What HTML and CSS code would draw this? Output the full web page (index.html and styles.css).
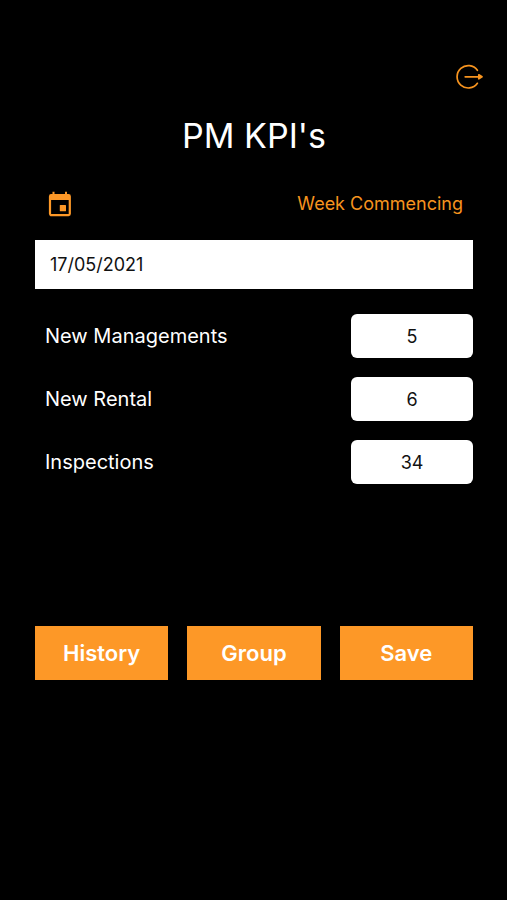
FILE: index.html
```html
<!DOCTYPE html>
<html lang="en">
<head>
    <meta charset="UTF-8">
    <meta name="viewport" content="width=device-width, initial-scale=1.0">
    <title>PM KPI's</title>
    <link rel="stylesheet" href="styles.css">
</head>
<body>
    <header class="top-bar">
        <button class="icon-btn" type="button" aria-label="Log out">
            <svg width="28" height="26" viewBox="0 0 28 26" fill="none" stroke="#f7941f" stroke-width="1.7" stroke-linecap="round">
                <path d="M21.4 6.3A11.2 11.2 0 1 0 21.4 19.3"/>
                <path d="M9.2 12.8H23"/>
                <path d="M22.8 10.8L26 12.8L22.8 14.8Z" fill="#f7941f" stroke-linejoin="round"/>
            </svg>
        </button>
    </header>

    <main class="kpi">
        <h1>PM KPI's</h1>

        <form class="kpi-form">
            <div class="week-header">
                <svg width="24" height="26" viewBox="0 0 24 26" fill="#fd9827">
                    <path fill-rule="evenodd" d="M4.5 0.8H6.5V3H17V0.8H19V3H20.5A2.4 2.4 0 0 1 22.9 5.4V22.8A2.4 2.4 0 0 1 20.5 25.2H3.3A2.4 2.4 0 0 1 0.9 22.8V5.4A2.4 2.4 0 0 1 3.3 3H4.5ZM3.1 8.9V23.1H20.7V8.9Z"/>
                    <rect x="11.8" y="14" width="6.2" height="6.2" rx="0.5"/>
                </svg>
                <label for="week">Week Commencing</label>
            </div>
            <input class="date-input" type="text" id="week" value="17/05/2021">

            <div class="fields">
                <div class="field">
                    <label for="managements">New Managements</label>
                    <input type="text" inputmode="numeric" id="managements" value="5">
                </div>
                <div class="field">
                    <label for="rental">New Rental</label>
                    <input type="text" inputmode="numeric" id="rental" value="6">
                </div>
                <div class="field">
                    <label for="inspections">Inspections</label>
                    <input type="text" inputmode="numeric" id="inspections" value="34">
                </div>
            </div>

            <div class="actions">
                <button class="btn" type="button">History</button>
                <button class="btn" type="button">Group</button>
                <button class="btn" type="button">Save</button>
            </div>
        </form>
    </main>
</body>
</html>
```

FILE: styles.css
```css
* {
    box-sizing: border-box;
}
body {
    margin: 0;
    background-color: #000;
    color: #fff;
    font-family: Inter, Roboto, sans-serif;
    font-size: 20px;
}
input,
button {
    border: none;
    border-radius: 0;
    font-family: inherit;
}
.top-bar {
    display: flex;
    justify-content: flex-end;
    padding: 64px 23px 0;
}
.icon-btn {
    display: flex;
    padding: 0;
    background: none;
    cursor: pointer;
}
.kpi {
    padding: 24px 34px 0 35px;
}
h1 {
    margin: 0;
    font-size: 34px;
    font-weight: 400;
    line-height: 44px;
    text-align: center;
}
.week-header {
    display: flex;
    align-items: center;
    justify-content: space-between;
    margin-top: 32px;
    padding: 0 10px 0 13px;
    color: #f7941f;
    font-size: 18px;
    line-height: 28px;
}
.date-input {
    display: block;
    width: 100%;
    height: 49px;
    margin-top: 22px;
    padding: 0 15px;
    background-color: #fff;
    color: #111;
    font-size: 18px;
}
.fields {
    display: grid;
    gap: 19px;
    margin-top: 25px;
}
.field {
    display: flex;
    align-items: center;
    justify-content: space-between;
    padding-left: 10px;
}
.field input {
    width: 122px;
    height: 44px;
    padding: 0;
    border-radius: 6px;
    background-color: #fff;
    color: #111;
    font-size: 18px;
    text-align: center;
}
.actions {
    display: grid;
    grid-template-columns: repeat(3, 1fr);
    gap: 19px;
    margin-top: 142px;
}
.btn {
    height: 54px;
    padding: 0;
    background-color: #fd9827;
    color: #fff;
    font-size: 22px;
    font-weight: 600;
    cursor: pointer;
}
```
